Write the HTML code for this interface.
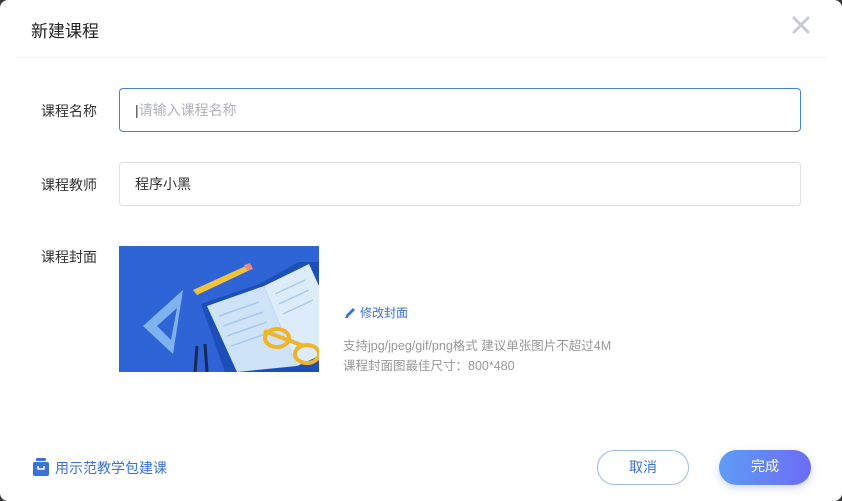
<!DOCTYPE html>
<html><head><meta charset="utf-8"><style>
*{margin:0;padding:0;box-sizing:border-box}
body{width:842px;height:501px;background:#3a3a3a;font-family:"Liberation Sans","Noto Sans CJK SC",sans-serif;overflow:hidden;position:relative}
.dlg{position:absolute;left:0;top:0;width:842px;height:501px;background:#fff;border-radius:8px}
.t{position:absolute;left:31px;top:17px;font-size:17px;color:#222}
.x{position:absolute;left:791px;top:15px}
.hr{position:absolute;left:16px;right:16px;top:57px;border-top:1px solid #eef0f3}
.lbl{position:absolute;left:41px;font-size:14px;color:#333}
.inp{position:absolute;left:119px;width:682px;height:44px;border:1px solid #dcdfe6;border-radius:4px;font-size:14px;padding-left:15px;line-height:42px;color:#333}
.inp.f{border-color:#4a7fd8;color:#b0b3b8}
.cov{position:absolute;left:119px;top:246px;width:200px;height:126px;background:#2f64d6;overflow:hidden}
.edit{position:absolute;left:344px;top:304px;font-size:12px;color:#3a72d8}
.hint{position:absolute;left:343px;font-size:12.5px;color:#999}
.foot{position:absolute;left:33px;top:458px;font-size:14px;color:#3a72d8}
.btn{position:absolute;top:450px;width:92px;height:35px;border-radius:18px;font-size:14px;text-align:center;line-height:33px}
</style></head><body><div class="dlg">
<div class="t">新建课程</div>
<svg class="x" width="20" height="20" viewBox="0 0 20 20"><path d="M3 3L17 17M17 3L3 17" stroke="#c8cbd0" stroke-width="3" stroke-linecap="round"/></svg>
<div class="hr"></div>
<div class="lbl" style="top:101px">课程名称</div>
<div class="inp f" style="top:88px"><span style="color:#333">|</span>请输入课程名称</div>
<div class="lbl" style="top:175px">课程教师</div>
<div class="inp" style="top:162px">程序小黑</div>
<div class="lbl" style="top:247px">课程封面</div>
<div class="cov"><svg width="200" height="126" viewBox="0 0 200 126">
<polygon points="64,44 54,108 24,80" fill="#7fb3ef"/><polygon points="58,62 52,94 38,80" fill="#2f64d6"/>
<polygon points="74,44 129,19 131,24 78,49" fill="#f3c33a"/><polygon points="125,19 131,17 134,23 129,25" fill="#e88a8a"/>
<polygon points="82,58 140,38 180,16 200,16 200,126 106,126" fill="#1d4fb8"/>
<polygon points="88,60 145,40 178,120 118,126" fill="#cfe3f7"/><polygon points="145,40 190,18 200,40 200,110 178,120" fill="#dcecfb"/>
<g stroke="#9cc3ea" stroke-width="1.5" opacity=".8"><path d="M100 70l40-14M104 80l40-14M108 90l40-14M112 100l40-14M156 48l30-14M160 58l30-14M164 68l30-14"/></g>
<g fill="none" stroke="#f0b429" stroke-width="4"><path d="M145 85 L185 100"/><ellipse cx="158" cy="92" rx="12" ry="9"/><ellipse cx="188" cy="108" rx="12" ry="9"/></g>
<path d="M78,100 L76,126 M86,98 L88,126" stroke="#1b2a55" stroke-width="3"/>
</svg></div>
<div class="edit"><svg width="13" height="13" viewBox="0 0 13 13" style="vertical-align:-1px;margin-right:3px"><path d="M2 10L9 3L11 5L4 12H2Z" fill="#3a72d8"/><path d="M1 12.5H4" stroke="#3a72d8"/></svg>修改封面</div>
<div class="hint" style="top:335px">支持jpg/jpeg/gif/png格式 建议单张图片不超过4M</div>
<div class="hint" style="top:355px">课程封面图最佳尺寸：800*480</div>
<div class="foot"><svg width="16" height="18" viewBox="0 0 16 18" style="vertical-align:-3px;margin-right:6px"><rect x="3" y="0" width="10" height="3" rx="1" fill="#3a72d8"/><rect x="0" y="4" width="16" height="14" rx="2" fill="#3a72d8"/><path d="M5 8v3h6v-3" stroke="#fff" stroke-width="1.5" fill="none"/></svg>用示范教学包建课</div>
<div class="btn" style="left:597px;border:1px solid #9dbbe5;color:#3a72d8">取消</div>
<div class="btn" style="left:719px;background:linear-gradient(90deg,#5f9cf5,#6c6cf5);color:#fff;box-shadow:0 3px 8px rgba(100,120,240,.3)">完成</div>
</div></body></html>
